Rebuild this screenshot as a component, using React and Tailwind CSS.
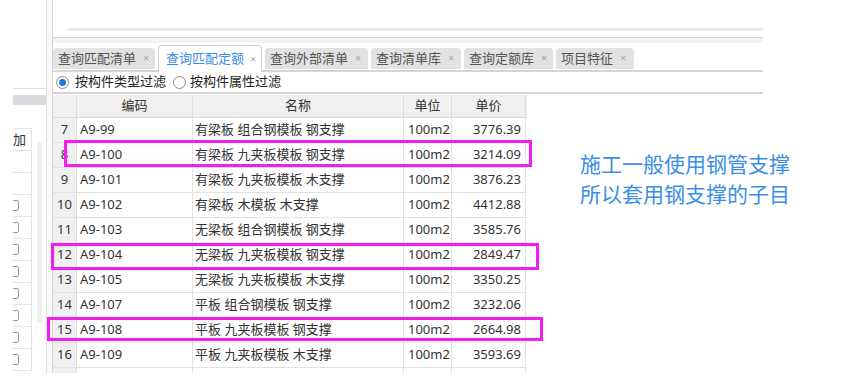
import React from "react";

const tabs = [
  { label: "查询匹配清单", w: "w-[102px]" },
  { label: "查询匹配定额", w: "w-[104px]", active: true },
  { label: "查询外部清单", w: "w-[103px]" },
  { label: "查询清单库", w: "w-[90px]" },
  { label: "查询定额库", w: "w-[89px]" },
  { label: "项目特征", w: "w-[78px]" },
];

const rows = [
  ["7", "A9-99", "有梁板 组合钢模板 钢支撑", "100m2", "3776.39"],
  ["8", "A9-100", "有梁板 九夹板模板 钢支撑", "100m2", "3214.09"],
  ["9", "A9-101", "有梁板 九夹板模板 木支撑", "100m2", "3876.23"],
  ["10", "A9-102", "有梁板 木模板 木支撑", "100m2", "4412.88"],
  ["11", "A9-103", "无梁板 组合钢模板 钢支撑", "100m2", "3585.76"],
  ["12", "A9-104", "无梁板 九夹板模板 钢支撑", "100m2", "2849.47"],
  ["13", "A9-105", "无梁板 九夹板模板 木支撑", "100m2", "3350.25"],
  ["14", "A9-107", "平板 组合钢模板 钢支撑", "100m2", "3232.06"],
  ["15", "A9-108", "平板 九夹板模板 钢支撑", "100m2", "2664.98"],
  ["16", "A9-109", "平板 九夹板模板 木支撑", "100m2", "3593.69"],
  ["", "", "", "", ""],
];

const Radio = ({ checked }) => (
  <span className="w-[13px] h-[13px] rounded-full border border-[#8a8a8a] bg-white flex items-center justify-center">
    {checked && <span className="w-[7px] h-[7px] rounded-full bg-[#1e78dc]" />}
  </span>
);

const LeftPanel = () => (
  <div className="flex h-[373px]">
    <div className="w-[13px]" />
    <div className="w-[34px] flex flex-col border-r border-[#e2e2e2]">
      <div className="h-[89px] border-b border-[#e0e0e0]" />
      <div className="h-[6px]" />
      <div className="h-[10px] bg-[#d9dbde]" />
      <div className="h-[23px]" />
      <div className="flex flex-1 overflow-hidden">
        <div className="w-[19px] flex flex-col border-t border-[#e3e3e3]">
          <div className="h-[22px] border-b border-r border-[#e3e3e3] flex items-center overflow-hidden text-[13px] text-[#333]">
            加
          </div>
          {Array.from({ length: 10 }).map((_, i) => (
            <div
              key={i}
              className="h-[22px] shrink-0 border-b border-r border-[#e3e3e3] flex items-center overflow-hidden"
            >
              {i >= 2 && (
                <span className="w-[12px] h-[11px] shrink-0 -ml-[6px] rounded-[2px] border border-[#9a9a9a]" />
              )}
            </div>
          ))}
        </div>
        <div className="flex-1 flex justify-center pt-[14px]">
          <div className="w-[5px] h-[181px] rounded bg-[#efefef]" />
        </div>
      </div>
    </div>
    <div className="w-[5px] bg-[#f8f8f8]" />
  </div>
);

const App = () => {
  return (
    <div className="relative w-[863px] h-[389px] bg-white overflow-hidden font-['Noto_Sans','Noto_Sans_CJK_SC',sans-serif] text-[#333]">
      <div className="flex">
        <LeftPanel />
        <div className="w-[711px] h-[373px] flex flex-col border-l border-[#d4d4d4]">
          {/* top area */}
          <div className="h-[38px] border-b border-[#d6d6d6] flex flex-col">
            <div className="h-[28px]" />
            <div className="h-[3px] ml-[14px] bg-[#ebebeb]" />
          </div>
          <div className="h-[5px] bg-[#f2f2f2]" />
          {/* tabs */}
          <div className="h-[29px] flex items-end gap-[3px] border-b-2 border-[#d2d6dc]">
            {tabs.map((t) =>
              t.active ? (
                <div
                  key={t.label}
                  className={`${t.w} h-[27px] -mb-[2px] bg-white border border-b-0 border-[#cfd3d9] rounded-t-[4px] flex items-center pl-[7px] gap-[6px] text-[13px] text-[#3a8ee6]`}
                >
                  <span>{t.label}</span>
                  <span className="text-[11px] text-[#a8a8a8]">×</span>
                </div>
              ) : (
                <div
                  key={t.label}
                  className={`${t.w} h-[21px] mb-[1px] bg-[#e2e2e2] rounded-t-[4px] flex items-center pl-[5px] gap-[7px] text-[13px] text-[#555]`}
                >
                  <span>{t.label}</span>
                  <span className="text-[11px] text-[#a8a8a8]">×</span>
                </div>
              )
            )}
          </div>
          {/* filter row */}
          <div className="h-[22px] flex items-center pl-[3px] text-[13px] text-[#222] border-b-2 border-[#d4d4d4]">
            <Radio checked />
            <span className="ml-[6px]">按构件类型过滤</span>
            <span className="ml-[7px]">
              <Radio />
            </span>
            <span className="ml-[4px]">按构件属性过滤</span>
          </div>
          {/* table */}
          <div className="flex-1 overflow-hidden pt-[1px]">
            <div className="w-[474px] text-[13px]">
              <div className="flex h-[23px] bg-[#f0f0f0] border-b border-[#dcdcdc]">
                <div className="w-[24px] border-r border-[#dcdcdc]" />
                <div className="w-[116px] border-r border-[#dcdcdc] flex items-center justify-center">
                  编码
                </div>
                <div className="w-[211px] border-r border-[#dcdcdc] flex items-center justify-center">
                  名称
                </div>
                <div className="w-[48px] border-r border-[#dcdcdc] flex items-center justify-center">
                  单位
                </div>
                <div className="w-[74px] border-r border-[#dcdcdc] flex items-center justify-center">
                  单价
                </div>
              </div>
              {rows.map((r, i) => (
                <div key={i} className="flex h-[25px] border-b border-[#e2e2e2]">
                  <div className="w-[24px] bg-[#f0f0f0] border-r border-[#dcdcdc] flex items-center justify-center">
                    {r[0]}
                  </div>
                  <div className="w-[116px] border-r border-[#e2e2e2] flex items-center pl-[3px]">
                    {r[1]}
                  </div>
                  <div className="w-[211px] border-r border-[#e2e2e2] flex items-center pl-[2px]">
                    {r[2]}
                  </div>
                  <div className="w-[48px] border-r border-[#e2e2e2] flex items-center pl-[4px]">
                    {r[3]}
                  </div>
                  <div className="w-[74px] border-r border-[#e2e2e2] flex items-center justify-end pr-[4px]">
                    {r[4]}
                  </div>
                </div>
              ))}
            </div>
          </div>
        </div>
      </div>

      {/* annotation */}
      <div className="absolute left-[580px] top-[149px] text-[21px] leading-[30px] text-[#3a8ee6] whitespace-nowrap">
        <div>施工一般使用钢管支撑</div>
        <div>所以套用钢支撑的子目</div>
      </div>

      {/* highlight boxes */}
      <div className="absolute left-[64px] top-[140px] w-[468px] h-[27px] border-[3px] border-[#f21ef0]" />
      <div className="absolute left-[51px] top-[243px] w-[488px] h-[27px] border-[3px] border-[#f21ef0]" />
      <div className="absolute left-[47px] top-[317px] w-[496px] h-[24px] border-[3px] border-[#f21ef0]" />
    </div>
  );
};

export default App;
